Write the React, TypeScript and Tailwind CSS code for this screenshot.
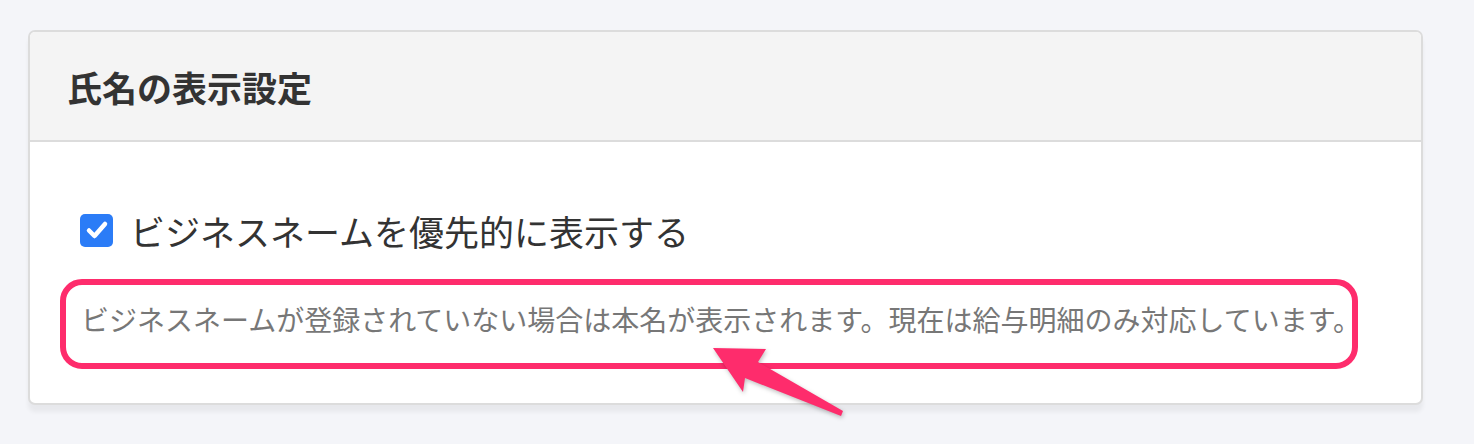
import React from "react";

export default function App() {
  return (
    <div
      className="relative w-[1474px] h-[444px] bg-[#f4f5f9] overflow-hidden"
      style={{ fontFamily: '"Noto Sans CJK JP", "Noto Sans", sans-serif' }}
    >
      <div className="pt-[30px] pl-[28px]">
        <div className="w-[1395px] rounded-[7px] border-2 border-[#dcdcdc] bg-white shadow-[0_7px_4px_rgba(0,0,0,0.05)] overflow-hidden">
          <div className="h-[110px] flex items-center pl-[37px] bg-[#f4f4f4] border-b-2 border-[#dcdcdc]">
            <h2 className="text-[35px] leading-none font-bold text-[#333333]">氏名の表示設定</h2>
          </div>
          <div className="px-[50px] pt-[64px] pb-[64px]">
            <div className="flex items-center h-[48px] gap-[17px]">
              <div className="w-[33px] h-[33px] rounded-[5px] bg-[#2b7cf7] flex items-center justify-center">
                <svg width="24" height="24" viewBox="0 0 24 24">
                  <path d="M4 12.5 L9.5 18 L20 6" fill="none" stroke="white" strokeWidth="4.5" strokeLinecap="round" strokeLinejoin="round" />
                </svg>
              </div>
              <span className="text-[35px] leading-none text-[#333333]">ビジネスネームを優先的に表示する</span>
            </div>
            <p className="mt-[45px] h-[40px] leading-[40px] text-[28px] text-[#777777] pl-[1px] whitespace-nowrap">
              ビジネスネームが登録されていない場合は本名が表示されます。現在は給与明細のみ対応しています。
            </p>
          </div>
        </div>
      </div>

      <div className="absolute left-[60px] top-[279px] w-[1298px] h-[90px] rounded-[22px] border-[6px] border-[#fe2c6c]" />

      <svg
        className="absolute left-0 top-0"
        width="1474"
        height="444"
        style={{ filter: "drop-shadow(1px 2px 2px rgba(0,0,0,0.25))" }}
      >
        <polygon
          points="713,348 766,349 758,362 843,411 841,416 745,378 743,392"
          fill="#fe2c6c"
        />
      </svg>
    </div>
  );
}
